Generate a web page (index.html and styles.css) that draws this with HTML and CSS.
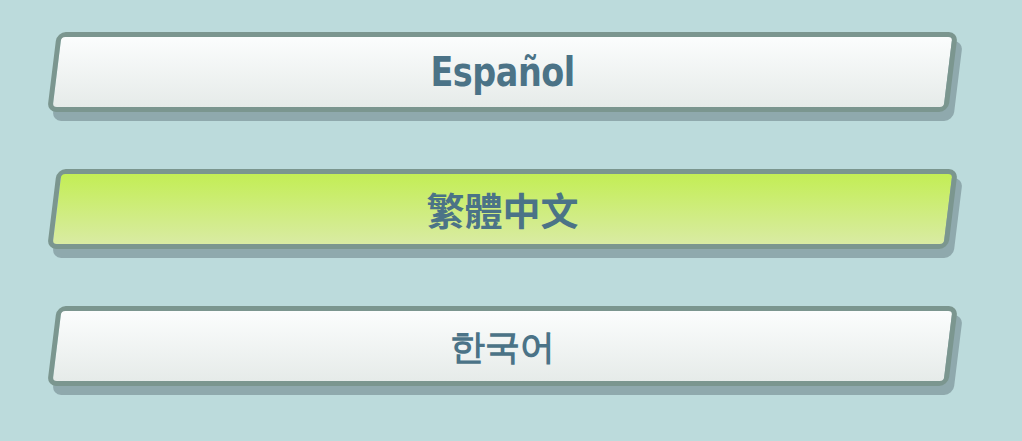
FILE: index.html
```html
<!DOCTYPE html>
<html lang="en">
<head>
  <meta charset="UTF-8" />
  <title>Language</title>
  <link rel="stylesheet" href="styles.css">
</head>
<body>
  <div class="lang-list">
    <button class="lang-btn"><span class="label latin">Español</span></button>
    <button class="lang-btn selected"><span class="label zh" lang="zh-Hant">繁體中文</span></button>
    <button class="lang-btn"><span class="label ko" lang="ko">한국어</span></button>
  </div>
</body>
</html>
```

FILE: styles.css
```css
* { box-sizing: border-box; }
body {
  margin: 0;
  background: #bcdbdc;
  font-family: "Noto Sans CJK KR", "Noto Sans", sans-serif;
}

.lang-list {
  display: flex;
  flex-direction: column;
  gap: 57px;
  padding: 32px 0 20px 52px;
  width: 960px;
}

.lang-btn {
  position: relative;
  display: flex;
  align-items: center;
  justify-content: center;
  height: 80px;
  width: 901px;
  padding: 0;
  border: none;
  background: none;
  cursor: pointer;
}

/* slanted face + its drop shadow, drawn behind the label */
.lang-btn::before,
.lang-btn::after {
  content: "";
  position: absolute;
  inset: 0;
  border-radius: 9px;
  transform: skewX(-7deg);
}

.lang-btn::after {
  top: 9px;
  left: 5px;
  right: -5px;
  bottom: -9px;
  background: #8fa9ad;
  z-index: 0;
}

.lang-btn::before {
  border: 5px solid #7b968f;
  background: linear-gradient(#fbfdfd, #e6ebe9);
  z-index: 1;
}

.lang-btn.selected::before {
  background: linear-gradient(#c3ee55, #d9eba3);
}

.label {
  position: relative;
  z-index: 2;
  color: #4b7387;
  font-weight: bold;
  line-height: 1;
}

.label.latin {
  font-family: "DejaVu Sans Condensed", "DejaVu Sans", sans-serif;
  font-size: 40px;
  letter-spacing: -0.5px;
  transform: scaleX(0.93);
}

.label.zh {
  font-family: "Noto Sans CJK TC", "Noto Sans", sans-serif;
  font-size: 38px;
}

.label.ko {
  font-size: 35px;
}
```
